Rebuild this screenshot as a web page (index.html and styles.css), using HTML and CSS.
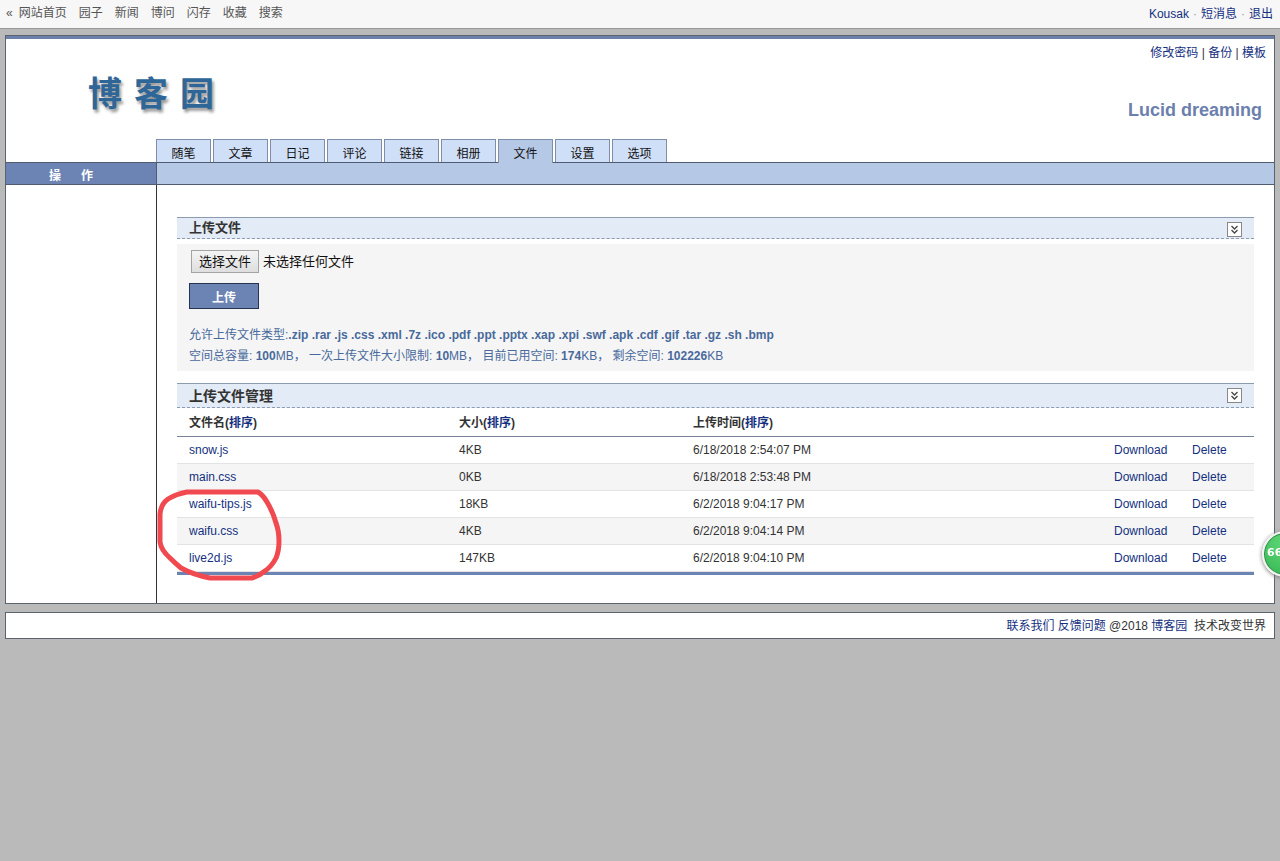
FILE: index.html
```html
<!DOCTYPE html>
<html lang="zh-CN">
<head>
<meta charset="utf-8">
<meta name="viewport" content="width=device-width, initial-scale=1">
<title>文件 - 博客园</title>
<link rel="stylesheet" href="styles.css">
</head>
<body>
<div class="topbar">
  <nav class="site-nav">
    <span class="back">«</span>
    <a href="#">网站首页</a><a href="#">园子</a><a href="#">新闻</a><a href="#">博问</a><a href="#">闪存</a><a href="#">收藏</a><a href="#">搜索</a>
  </nav>
  <div class="account"><a href="#">Kousak</a><span class="dot">·</span><a href="#">短消息</a><span class="dot">·</span><a href="#">退出</a></div>
</div>

<div class="frame">
  <header class="header">
    <div class="header-row">
      <a class="logo" href="#"><span>博</span><span>客</span><span>园</span></a>
      <div class="header-side">
        <div class="tools"><a href="#">修改密码</a> | <a href="#">备份</a> | <a href="#">模板</a></div>
        <h1 class="blog-title">Lucid dreaming</h1>
      </div>
    </div>
    <nav class="tabs">
      <a class="tab" href="#">随笔</a>
      <a class="tab" href="#">文章</a>
      <a class="tab" href="#">日记</a>
      <a class="tab" href="#">评论</a>
      <a class="tab" href="#">链接</a>
      <a class="tab" href="#">相册</a>
      <a class="tab active" href="#">文件</a>
      <a class="tab" href="#">设置</a>
      <a class="tab" href="#">选项</a>
    </nav>
  </header>
  <div class="subbar">
    <div class="subbar-title"><span>操</span><span>作</span></div>
    <div class="subbar-fill"></div>
  </div>
  <div class="columns">
    <aside class="sidebar"></aside>
    <main class="content">
      <section class="panel">
        <div class="panel-head">
          <h2>上传文件</h2>
          <button class="toggle" type="button" aria-label="折叠上传文件">
            <svg viewBox="0 0 13 13" width="13" height="13"><path d="M3.500 3l3 3 3-3M3.500 7l3 3 3-3"/></svg>
          </button>
        </div>
        <form class="upload">
          <div class="file-row">
            <input class="file-input" type="file" id="file">
            <label class="file-button" for="file">选择文件</label>
            <span class="file-state">未选择任何文件</span>
          </div>
          <button class="submit" type="button">上传</button>
          <div class="limits">
            <p>允许上传文件类型:<b>.zip .rar .js .css .xml .7z .ico .pdf .ppt .pptx .xap .xpi .swf .apk .cdf .gif .tar .gz .sh .bmp</b></p>
            <p>空间总容量: <b>100</b>MB， 一次上传文件大小限制: <b>10</b>MB， 目前已用空间: <b>174</b>KB， 剩余空间: <b>102226</b>KB</p>
          </div>
        </form>
      </section>

      <section class="panel">
        <div class="panel-head large">
          <h2>上传文件管理</h2>
          <button class="toggle" type="button" aria-label="折叠上传文件管理">
            <svg viewBox="0 0 13 13" width="13" height="13"><path d="M3.500 3l3 3 3-3M3.500 7l3 3 3-3"/></svg>
          </button>
        </div>
        <div class="files-wrap">
          <table class="files">
            <colgroup><col class="c-name"><col class="c-size"><col><col class="c-down"><col class="c-del"></colgroup>
            <thead>
              <tr><th>文件名(<a href="#">排序</a>)</th><th>大小(<a href="#">排序</a>)</th><th>上传时间(<a href="#">排序</a>)</th><th></th><th></th></tr>
            </thead>
            <tbody>
              <tr><td><a href="#">snow.js</a></td><td>4KB</td><td>6/18/2018 2:54:07 PM</td><td><a href="#">Download</a></td><td><a href="#">Delete</a></td></tr>
              <tr><td><a href="#">main.css</a></td><td>0KB</td><td>6/18/2018 2:53:48 PM</td><td><a href="#">Download</a></td><td><a href="#">Delete</a></td></tr>
              <tr><td><a href="#">waifu-tips.js</a></td><td>18KB</td><td>6/2/2018 9:04:17 PM</td><td><a href="#">Download</a></td><td><a href="#">Delete</a></td></tr>
              <tr><td><a href="#">waifu.css</a></td><td>4KB</td><td>6/2/2018 9:04:14 PM</td><td><a href="#">Download</a></td><td><a href="#">Delete</a></td></tr>
              <tr><td><a href="#">live2d.js</a></td><td>147KB</td><td>6/2/2018 9:04:10 PM</td><td><a href="#">Download</a></td><td><a href="#">Delete</a></td></tr>
            </tbody>
          </table>
          <svg class="mark" viewBox="0 0 126 94" width="126" height="94" aria-hidden="true"><path d="M30 4 L101 4 Q106 7 110 14 Q116 24 119 35 Q122 43 122 53 Q122 63 119 70 Q115 78 108 83 Q102 88 95 90 L53 90 Q37 87 24 80 Q18 75 13 70 Q4 62 3 54 L3 26 Q4 16 11 11 Q19 6 30 4 Z"/></svg>
        </div>
      </section>
    </main>
  </div>
</div>

<footer class="footer"><a href="#">联系我们</a> <a href="#">反馈问题</a> @2018 <a href="#">博客园</a>&nbsp; 技术改变世界</footer>

<div class="speed"><span>66</span></div>
</body>
</html>
```
FILE: styles.css
```css
* { box-sizing: border-box; }

body {
  margin: 0;
  background: #bababa;
  color: #333;
  font: 12px/18px "Liberation Sans", "Noto Sans CJK SC", sans-serif;
}

a { color: #14307f; text-decoration: none; }
h1, h2, p { margin: 0; }
button { font-family: inherit; cursor: pointer; }

.topbar {
  display: flex;
  justify-content: space-between;
  height: 29px;
  padding: 4px 7px 0 6px;
  background: #f7f7f7;
  border-bottom: 1px solid #999;
}
.site-nav { display: flex; gap: 12px; }
.site-nav a, .back { color: #555; }
.back { margin-right: -6px; }
.account { padding-top: 1px; }
.dot { margin: 0 4px; color: #999; }

.frame {
  margin: 6px 5px 0;
  border: 1px solid #5c6370;
  background: #fff;
}
.header { border-top: 3px solid #6c80ae; }
.header-row {
  display: flex;
  justify-content: space-between;
  height: 100px;
  padding: 5px 8px 0 82px;
}
.logo {
  display: flex;
  gap: 12px;
  padding-top: 20px;
  color: #2f6698;
  font: 700 34px/56px "Noto Sans CJK SC", sans-serif;
  text-shadow: 2px 3px 3px #999;
}
.header-side { text-align: right; }
.blog-title {
  margin: 35px 4px 0 0;
  color: #6c80ae;
  font-size: 18px;
  line-height: 26px;
}

.tabs { display: flex; gap: 2px; padding-left: 150px; }
.tab {
  width: 55px;
  height: 23px;
  padding-top: 5px;
  border: 1px solid #7f8da6;
  border-bottom: 0;
  background: #d0dff8;
  color: #111;
  text-align: center;
}
.tab.active {
  position: relative;
  height: 24px;
  margin-bottom: -1px;
  background: #b5c8e6;
}

.subbar {
  display: flex;
  height: 23px;
  border: solid #4f5b70;
  border-width: 1px 0;
  background: #b5c8e6;
}
.subbar-title {
  display: flex;
  gap: 20px;
  width: 151px;
  padding: 4px 0 0 43px;
  border-right: 1px solid #4f5b70;
  background: #6b84b4;
  color: #fff;
  font-weight: bold;
}

.columns { display: flex; }
.sidebar { width: 151px; border-right: 1px solid #333; }
.content { flex: 1; padding: 32px 20px 28px; }

.panel + .panel { margin-top: 12px; }
.panel-head {
  display: flex;
  align-items: center;
  justify-content: space-between;
  height: 22px;
  padding: 0 12px;
  border-top: 1px solid #8c9bb0;
  border-bottom: 1px dashed #8c9bb0;
  background: #e3ebf6;
}
.panel-head h2 { font-size: 13px; }
.panel-head.large { height: 25px; }
.panel-head.large h2 { font-size: 14px; }
.toggle {
  display: flex;
  width: 15px;
  height: 15px;
  margin-top: 2px;
  padding: 0;
  border: 1px solid #888;
  background: #fff;
}
.large .toggle { margin-top: 0; }
.toggle path { fill: none; stroke: #444; stroke-width: 1.300; }

.upload {
  margin-top: 5px;
  padding: 6px 12px 4px;
  background: #f5f5f5;
}
.file-row {
  display: flex;
  gap: 4px;
  padding-left: 2px;
  font-size: 13px;
  line-height: 23px;
  color: #111;
}
.file-input { position: absolute; width: 1px; height: 1px; opacity: 0; }
.file-button {
  width: 68px;
  height: 23px;
  border: 1px solid #a3a3a3;
  background: linear-gradient(#f4f4f4, #dedede);
  line-height: 22px;
  text-align: center;
  cursor: pointer;
}
.submit {
  display: block;
  width: 70px;
  height: 26px;
  margin-top: 10px;
  padding: 0;
  border: 1px solid #26344f;
  background: #6b84b4;
  color: #fff;
  font-size: 12px;
  font-weight: bold;
}
.limits { margin-top: 16px; color: #48699b; line-height: 21px; }

.files-wrap { position: relative; }
.files {
  width: 100%;
  table-layout: fixed;
  border-collapse: separate;
  border-spacing: 0;
  border-bottom: 3px solid #6b84b4;
}
.c-name { width: 270px; }
.c-size { width: 234px; }
.c-down { width: 78px; }
.c-del { width: 74px; }
.files th {
  height: 29px;
  padding: 1px 0 0 12px;
  border-bottom: 1px solid #77839a;
  text-align: left;
}
.files td {
  height: 27px;
  padding: 0 0 0 12px;
  border-bottom: 1px solid #e3e3e3;
}
.files tbody tr:nth-child(even) { background: #f5f5f5; }
.mark { position: absolute; left: -20px; top: 80px; pointer-events: none; }
.mark path {
  fill: none;
  stroke: #f04a50;
  stroke-width: 5;
  stroke-linejoin: round;
}

.footer {
  margin: 8px 5px 0;
  padding: 4px 8px 3px;
  border: 1px solid #5c6370;
  background: #fff;
  text-align: right;
}

.speed {
  position: fixed;
  top: 531px;
  right: -28px;
  width: 46px;
  height: 46px;
  padding-left: 3px;
  border: 2px solid #f2f2f2;
  border-radius: 50%;
  background: radial-gradient(circle at 50% 25%, #5fd878, #35b552);
  box-shadow: inset 0 0 0 1px #2f8a48, 0 1px 4px #777;
  color: #fff;
  font: bold 11px/40px "DejaVu Sans", sans-serif;
}
```
